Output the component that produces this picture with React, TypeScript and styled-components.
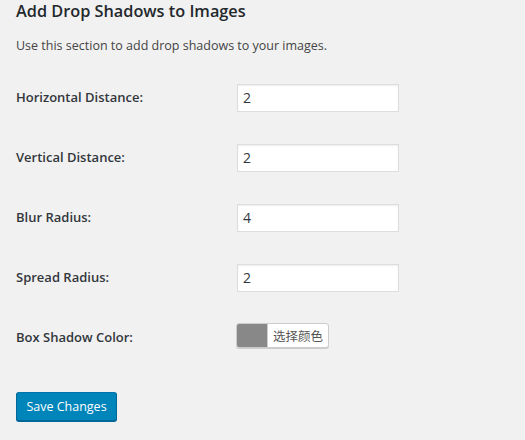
import styled, { createGlobalStyle } from 'styled-components';

const GlobalStyle = createGlobalStyle`
  html, body {
    margin: 0;
    padding: 0;
    background: #f1f1f1;
  }
  body {
    font-family: "Open Sans", "Noto Sans", "Noto Sans CJK SC", sans-serif;
    color: #23282d;
  }
`;

const Wrap = styled.div`
  padding: 0 16px;
  width: 525px;
  height: 440px;
  box-sizing: border-box;
`;

const Title = styled.h2`
  margin: 0;
  font-size: 16.3px;
  line-height: 22px;
  font-weight: 600;
  color: #23282d;
`;

const Desc = styled.p`
  margin: 14px 0 11px;
  font-size: 12.5px;
  line-height: 20px;
  color: #444;
`;

const Row = styled.div`
  display: grid;
  grid-template-columns: 220px 1fr;
  align-items: center;
  height: 60px;
`;

const Label = styled.label`
  font-size: 13px;
  font-weight: 600;
  color: #32373c;
`;

const TextInput = styled.input`
  box-sizing: border-box;
  width: 162px;
  height: 28px;
  margin: 1px 0 0 1px;
  padding: 0 5px;
  border: 1px solid #ddd;
  border-radius: 0;
  box-shadow: inset 0 1px 2px rgba(0, 0, 0, 0.07);
  background: #fff;
  font-family: inherit;
  font-size: 14px;
  color: #32373c;
  outline: none;
`;

const ColorButton = styled.button`
  display: inline-flex;
  align-items: stretch;
  height: 25px;
  padding: 0;
  margin: 0 0 2px;
  border: 1px solid #ccc;
  border-radius: 3px;
  box-shadow: 0 1px 0 #ccc;
  background: #fff;
  overflow: hidden;
  cursor: pointer;
  width: 93px;
`;

const Swatch = styled.span<{ $color: string }>`
  width: 30px;
  background: ${(p) => p.$color};
`;

const SwatchText = styled.span`
  flex: 1;
  display: flex;
  align-items: center;
  justify-content: center;
  border-left: 1px solid #ccc;
  font-family: "Noto Sans CJK SC", sans-serif;
  font-size: 12.5px;
  color: #555;
`;

const Submit = styled.button`
  margin-top: 25px;
  width: 101px;
  height: 29px;
  padding: 0;
  white-space: nowrap;
  background: #0085ba;
  border: 1px solid #0073aa;
  border-color: #0073aa #006799 #006799;
  border-radius: 3px;
  box-shadow: 0 1px 0 #006799;
  color: #fff;
  font-family: inherit;
  font-size: 12.5px;
  cursor: pointer;
`;

const fields = [
  { label: 'Horizontal Distance:', value: '2' },
  { label: 'Vertical Distance:', value: '2' },
  { label: 'Blur Radius:', value: '4' },
  { label: 'Spread Radius:', value: '2' },
];

export default function App() {
  return (
    <>
      <GlobalStyle />
      <Wrap>
        <Title>Add Drop Shadows to Images</Title>
        <Desc>Use this section to add drop shadows to your images.</Desc>
        {fields.map((f) => (
          <Row key={f.label}>
            <Label>{f.label}</Label>
            <div>
              <TextInput type="text" defaultValue={f.value} />
            </div>
          </Row>
        ))}
        <Row>
          <Label>Box Shadow Color:</Label>
          <div>
            <ColorButton type="button">
              <Swatch $color="#888888" />
              <SwatchText>选择颜色</SwatchText>
            </ColorButton>
          </div>
        </Row>
        <Submit type="button">Save Changes</Submit>
      </Wrap>
    </>
  );
}
